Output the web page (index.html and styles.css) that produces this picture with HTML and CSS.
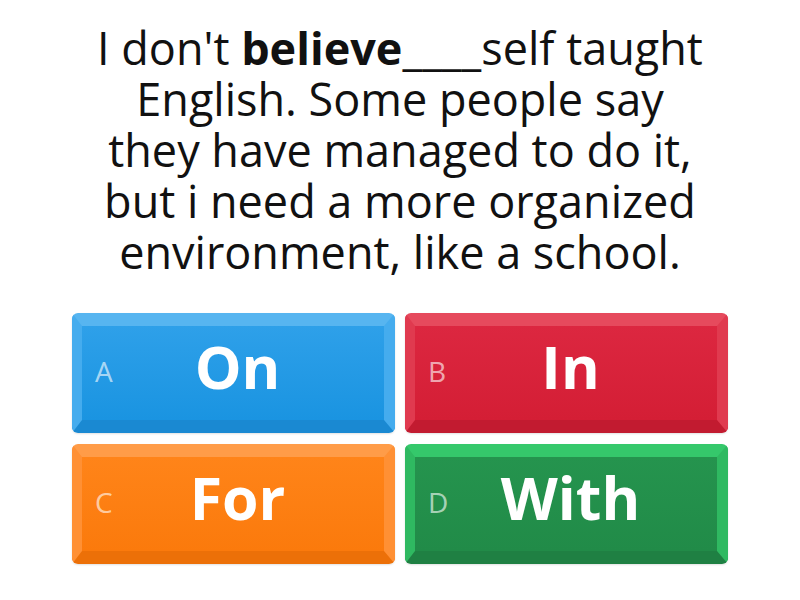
FILE: index.html
```html
<!DOCTYPE html>
<html>
<head>
<meta charset="utf-8">
<link rel="stylesheet" href="styles.css">
</head>
<body>
<div class="page">
  <div class="question">I don't <b>believe</b>____self taught English. Some people say they have managed to do it, but i need a more organized environment, like a school.</div>
  <div class="answers">
    <div class="btn blue"><span class="key">A</span><span class="word">On</span></div>
    <div class="btn red"><span class="key">B</span><span class="word">In</span></div>
    <div class="btn orange"><span class="key">C</span><span class="word">For</span></div>
    <div class="btn green"><span class="key">D</span><span class="word">With</span></div>
  </div>
</div>
</body>
</html>
```

FILE: styles.css
```css
html, body {
  margin: 0;
  padding: 0;
  background: #ffffff;
}
.page {
  width: 800px;
  height: 600px;
  display: flex;
  flex-direction: column;
  align-items: center;
  font-family: "Open Sans", "DejaVu Sans", sans-serif;
}
.question {
  width: 620px;
  margin-top: 22px;
  text-align: center;
  font-size: 45px;
  line-height: 51px;
  color: #111111;
}
.question b {
  font-weight: 700;
}
.answers {
  margin-top: 36px;
  display: grid;
  grid-template-columns: 323px 323px;
  grid-auto-rows: 120px;
  column-gap: 10px;
  row-gap: 11px;
}
.btn {
  box-sizing: border-box;
  border-radius: 6px;
  border-style: solid;
  border-width: 13px 11px 13px 10px;
  display: flex;
  align-items: center;
  color: #ffffff;
  box-shadow: 0 1px 2px rgba(0,0,0,0.12);
}
.key {
  width: 44px;
  padding-left: 13px;
  font-size: 28px;
  color: rgba(255,255,255,0.62);
  margin-top: -4px;
}
.word {
  flex: 1;
  text-align: center;
  padding-right: 48px;
  font-size: 59px;
  font-weight: 700;
  margin-top: -15px;
}
.blue {
  background: linear-gradient(#2ea0e9, #1a94e1);
  border-color: #57b5f0 #45acee #1a89d2 #45acee;
}
.red {
  background: linear-gradient(#dc2740, #d41e35);
  border-color: #e64a5d #e03a4f #c21b30 #e03a4f;
}
.orange {
  background: linear-gradient(#ff8419, #fb7a0c);
  border-color: #ff9c48 #ff9034 #ec7008 #ff9034;
}
.green {
  background: linear-gradient(#25944e, #218b48);
  border-color: #35c86b #2fb961 #1f8043 #2fb961;
}
```
